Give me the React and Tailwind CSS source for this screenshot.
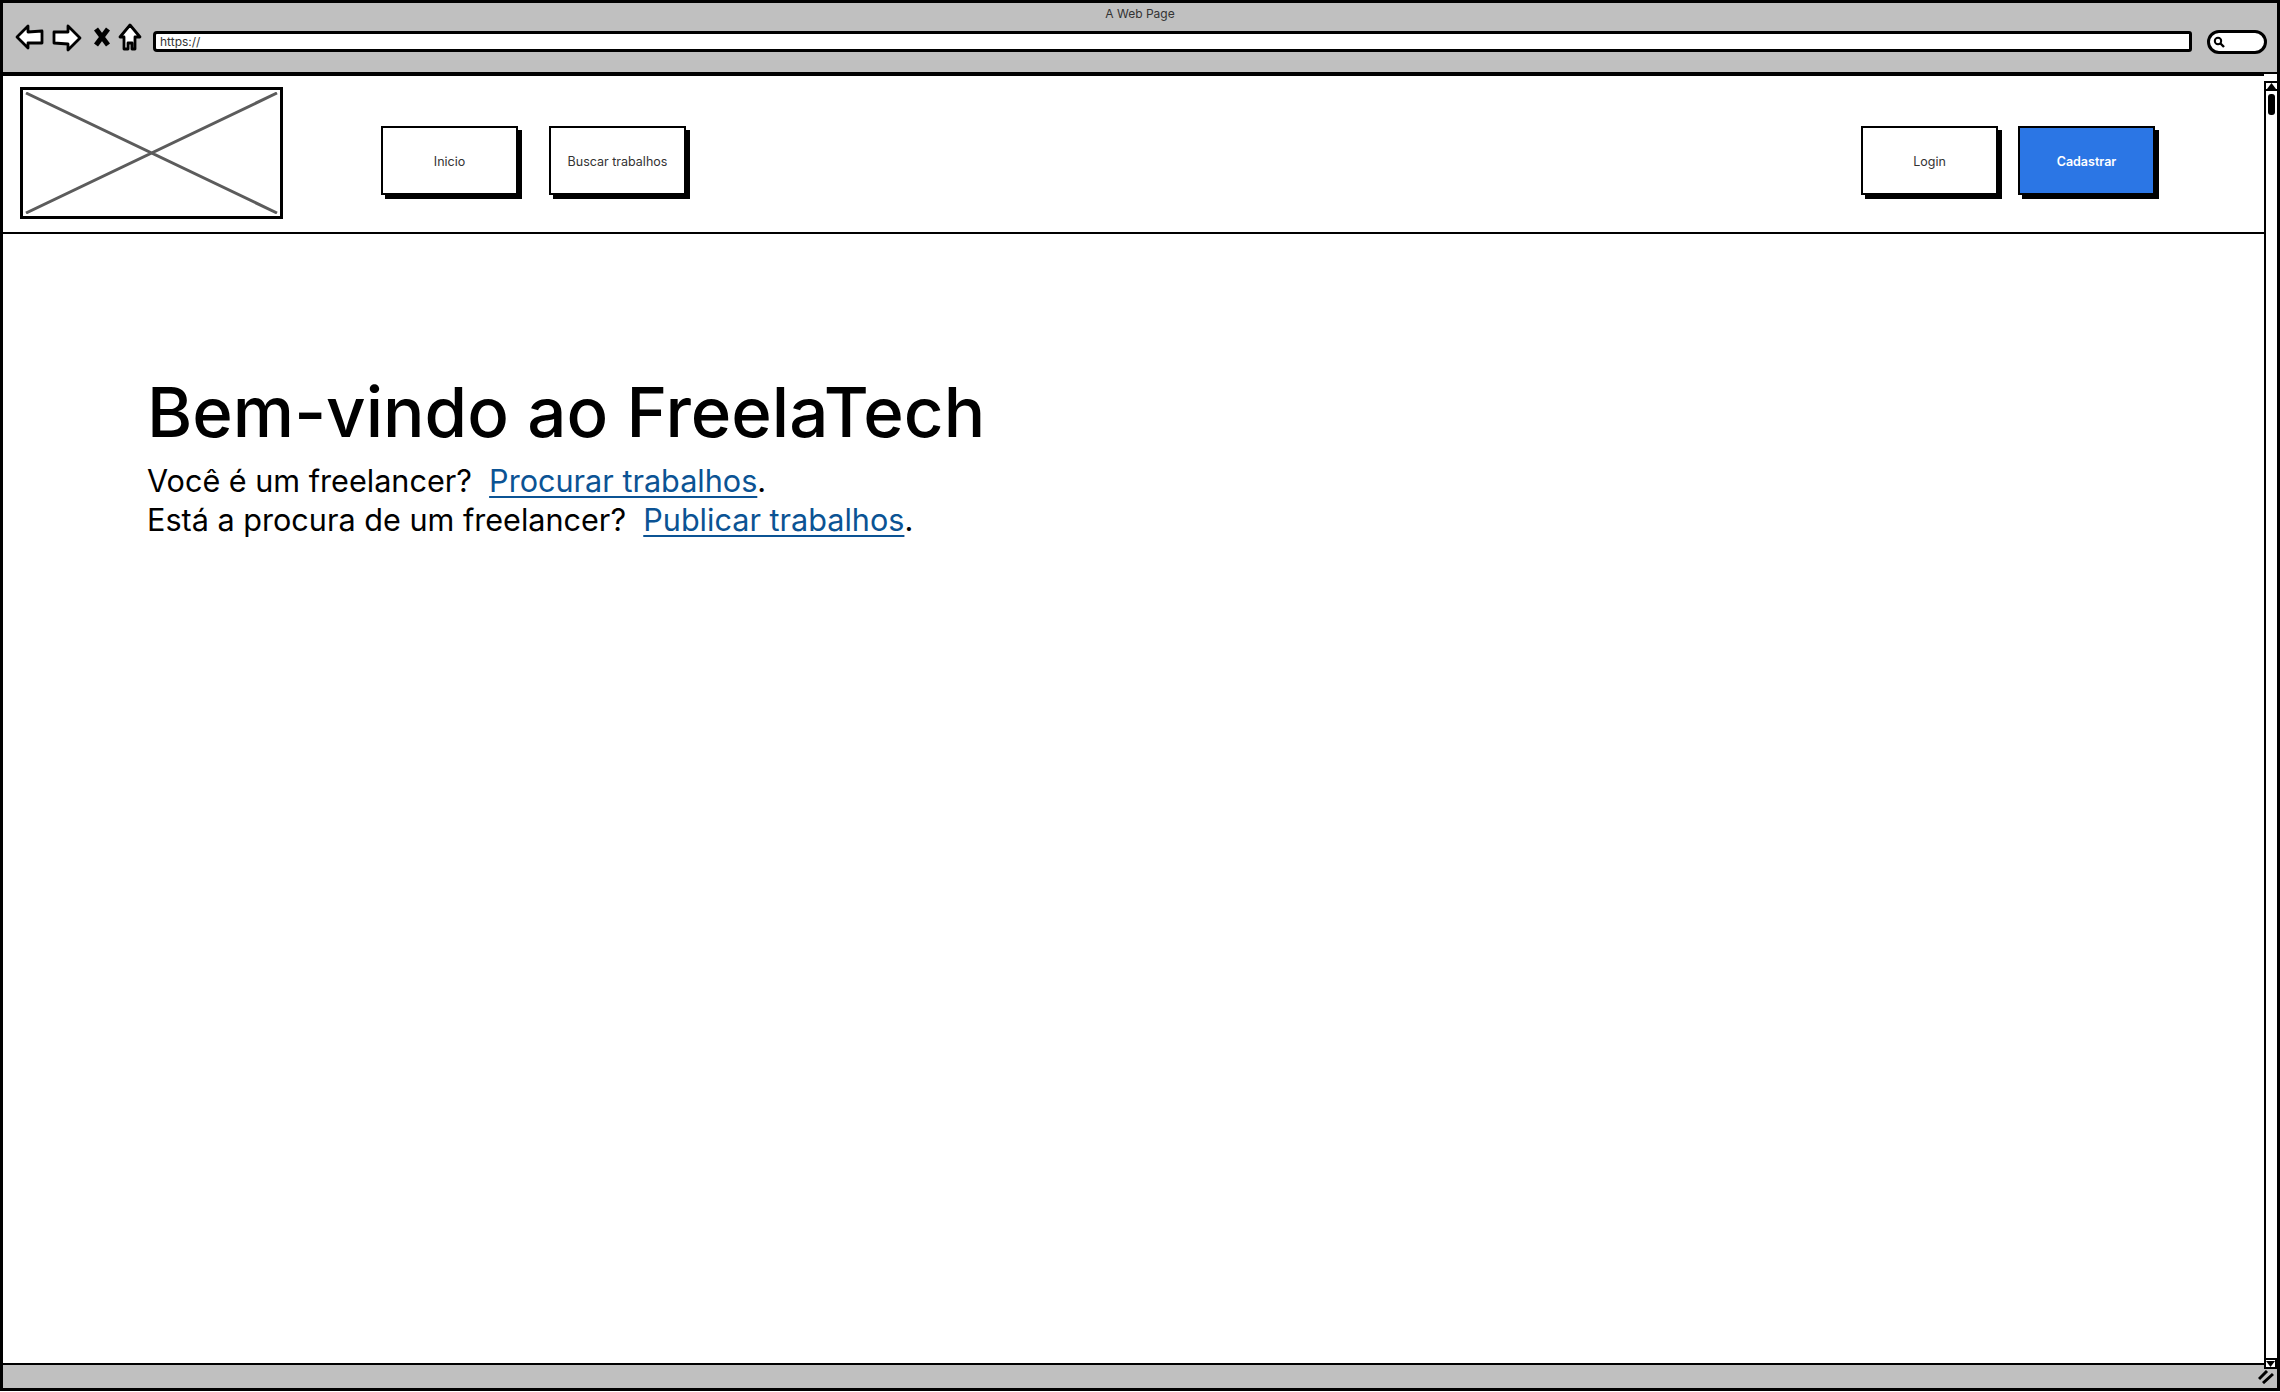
const font = { fontFamily: '"Inter", "Noto Sans", sans-serif' };

function Button({ label, primary }) {
  return (
    <div
      className={`w-[137px] h-[69px] flex items-center justify-center border-2 border-black shadow-[4px_4px_0_#000] text-[12.5px] pt-[3px] ${
        primary ? "bg-[#2b76e5] text-white font-semibold" : "bg-white text-[#333333]"
      }`}
    >
      {label}
    </div>
  );
}

function NavIcons() {
  const stroke = { fill: "white", stroke: "black", strokeWidth: 2.8, strokeLinejoin: "round" };
  return (
    <div className="flex items-start">
      <svg width="29" height="26" viewBox="0 0 29 26" className="ml-[12px] mt-[-7px]">
        <path d="M2 13 L13 2 L13 8 L27 7 L27 19 L13 19 L13 24 Z" {...stroke} />
      </svg>
      <svg width="30" height="28" viewBox="0 0 30 28" className="ml-[8px] mt-[-7px]">
        <path d="M2 8 L16 8 L16 2 L28 14 L16 26 L16 20 L2 19 Z" {...stroke} />
      </svg>
      <svg width="18" height="20" viewBox="0 0 18 20" className="ml-[11px] mt-[-4px]">
        <path d="M3 2 L15 18 M15 2 L3 18" fill="none" stroke="black" strokeWidth="5" />
      </svg>
      <svg width="24" height="28" viewBox="0 0 24 28" className="ml-[7px] mt-[-8px]">
        <path d="M12 2 L22 14 L17 14 L17 26 L14 26 L14 20 L10 20 L10 26 L6 26 L6 14 L2 14 Z" {...stroke} />
      </svg>
    </div>
  );
}

export default function App() {
  return (
    <div style={font} className="relative w-[2280px] h-[1391px] border-[3px] border-black bg-white flex flex-col overflow-hidden">
      <div className="h-[71px] bg-[#c0c0c0] border-b-[2px] border-black">
        <div className="text-center text-[12px] leading-[20px] pt-[1px] text-[#333333]">A Web Page</div>
        <div className="flex items-start mt-[7px]">
          <NavIcons />
          <div className="ml-[11px] w-[2039px] h-[21px] bg-white border-[3px] border-black rounded-l-[4px] rounded-r-[3px] pl-[4px] text-[12px] leading-[15px] text-[#333333]">
            https://
          </div>
          <div className="ml-[15px] w-[60px] h-[24px] mt-[-1px] bg-white border-[3px] border-black rounded-full flex items-center pl-[3px]">
            <svg width="12" height="12" viewBox="0 0 12 12">
              <circle cx="5" cy="5" r="3.2" fill="none" stroke="black" strokeWidth="2" />
              <path d="M7.5 7.5 L11 11" stroke="black" strokeWidth="2.4" />
            </svg>
          </div>
        </div>
      </div>

      <div className="flex-1 flex min-h-0">
        <div className="flex-1 flex flex-col">
          <header className="h-[160px] border-y-[2px] border-black flex items-start pt-[11px] pl-[17px] pr-[109px]">
            <div className="w-[263px] h-[132px] border-[3px] border-black p-[2px]">
              <svg width="100%" height="100%" viewBox="0 0 253 122" preserveAspectRatio="none">
                <path d="M1 1 L252 121 M252 1 L1 121" stroke="#5c5c5c" strokeWidth="3" fill="none" />
              </svg>
            </div>
            <nav className="flex gap-[31px] ml-[98px] mt-[39px]">
              <Button label="Inicio" />
              <Button label="Buscar trabalhos" />
            </nav>
            <div className="flex gap-[20px] ml-auto mt-[39px]">
              <Button label="Login" />
              <Button label="Cadastrar" primary />
            </div>
          </header>
          <main className="pl-[144px] pt-[135px] text-black">
            <h1 className="text-[69px] leading-[86px] font-medium">Bem-vindo ao FreelaTech</h1>
            <p className="text-[30.6px] leading-[39px] mt-[6px]">
              Você é um freelancer?&nbsp; <a className="text-[#0b5394] underline decoration-2 underline-offset-[4px]">Procurar trabalhos</a>.
            </p>
            <p className="text-[30.6px] leading-[39px]">
              Está a procura de um freelancer?&nbsp; <a className="text-[#0b5394] underline decoration-2 underline-offset-[4px]">Publicar trabalhos</a>.
            </p>
          </main>
        </div>
        <div className="w-[13px] mt-[7px] border-l-2 border-black flex flex-col items-center">
          <div className="w-full h-[10px] border-y-2 border-black flex items-center justify-center">
            <svg width="9" height="6" viewBox="0 0 9 6"><path d="M4.5 0 L9 6 L0 6 Z" fill="black" /></svg>
          </div>
          <div className="w-[7px] h-[21px] mt-[3px] bg-black rounded-[3px]" />
        </div>
      </div>

      <div className="h-[25px] bg-[#c0c0c0] border-t-[2px] border-black flex justify-end items-center pr-[3px]">
        <svg width="16" height="14" viewBox="0 0 16 14">
          <path d="M1 9 L9 1 M5 13 L15 4" stroke="black" strokeWidth="3" fill="none" />
        </svg>
      </div>
      <div className="absolute right-0 bottom-[19px] w-[13px] h-[11px] bg-white border-2 border-black flex items-center justify-center">
        <svg width="9" height="6" viewBox="0 0 9 6"><path d="M0 0 L9 0 L4.5 6 Z" fill="black" /></svg>
      </div>
    </div>
  );
}
